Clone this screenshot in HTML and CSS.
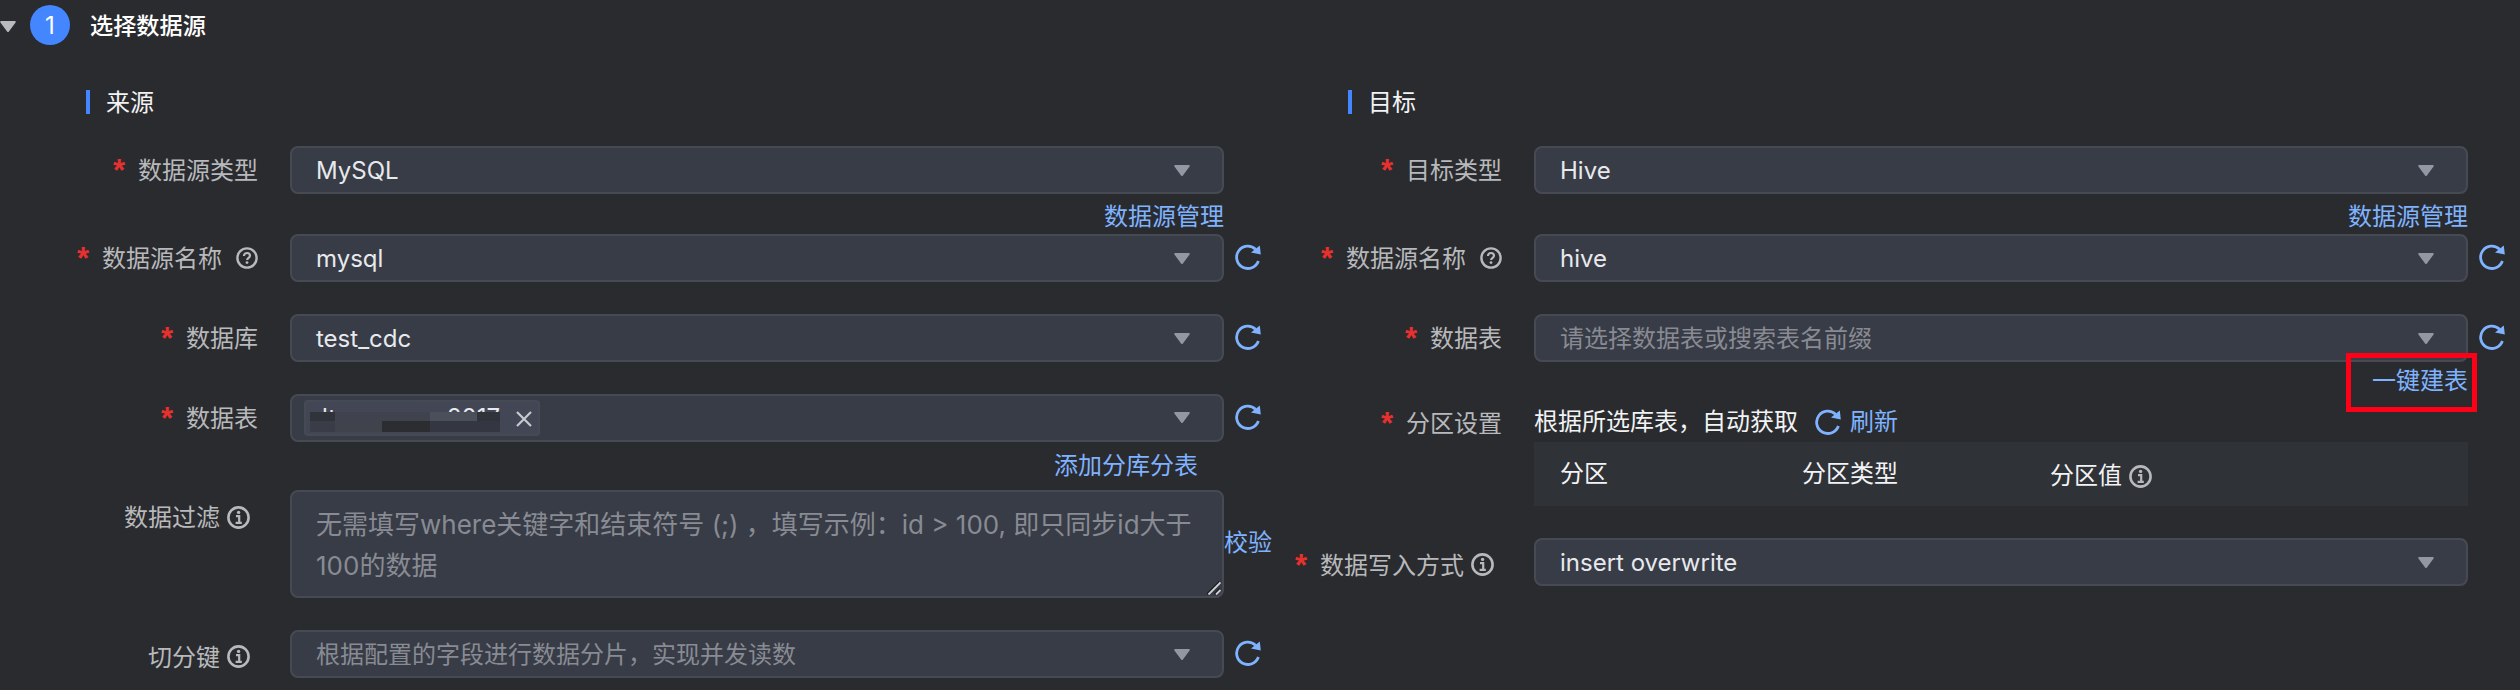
FILE: index.html
```html
<!DOCTYPE html>
<html lang="zh-CN">

<head>
    <meta charset="UTF-8">
    <meta name="viewport" content="width=device-width, initial-scale=1.0">
    <title>选择数据源</title>
    <link rel="stylesheet" href="styles.css">
</head>

<body>
    <!-- 公用图标 -->
    <svg class="sprite">
        <symbol id="arrow" viewBox="0 0 16 11">
            <path d="M1.2 0h13.6c.9 0 1.3.8.8 1.5L8.9 10.4c-.5.7-1.3.7-1.8 0L.4 1.5C-.1.8.3 0 1.2 0z" />
        </symbol>
        <symbol id="refresh" viewBox="0 0 26 26">
            <path d="M23.4 17A11.2 11.2 0 1 1 20.6 5.2" fill="none" stroke="currentColor" stroke-width="2.8" />
            <path d="M24.8 1.4L25.8 10.6L16 8.4z" fill="currentColor" />
        </symbol>
        <symbol id="info" viewBox="0 0 23 23">
            <circle cx="11.5" cy="11.5" r="10.1" fill="none" stroke="currentColor" stroke-width="2.6" />
            <circle cx="11.6" cy="6.4" r="1.7" fill="currentColor" />
            <path d="M9 10.1h3.2v6.6M8.6 16.8h6.2" fill="none" stroke="currentColor" stroke-width="2.2" />
        </symbol>
        <symbol id="help" viewBox="0 0 22 22">
            <circle cx="11" cy="11" r="9.6" fill="none" stroke="currentColor" stroke-width="2.4" />
            <path d="M8 8.9c0-1.8 1.3-2.9 3-2.9s3 1.1 3 2.7c0 2.1-2.9 2.1-2.9 4.4" fill="none" stroke="currentColor" stroke-width="2.2" />
            <circle cx="11" cy="15.6" r="1.4" fill="currentColor" />
        </symbol>
    </svg>

    <div class="step">
        <svg class="step-arrow"><use href="#arrow" /></svg>
        <span class="step-num">1</span>
        <span class="step-title">选择数据源</span>
    </div>

    <div class="columns">
        <!-- 来源 -->
        <div class="column">
            <div class="column-title">来源</div>
            <div class="form-item">
                <div class="label"><i>*</i>数据源类型</div>
                <div class="select">MySQL<svg class="arrow"><use href="#arrow" /></svg></div>
            </div>
            <div class="link-row"><a>数据源管理</a></div>
            <div class="form-item">
                <div class="label"><i>*</i>数据源名称<svg class="help"><use href="#help" /></svg></div>
                <div class="select">mysql<svg class="arrow"><use href="#arrow" /></svg></div>
                <svg class="refresh"><use href="#refresh" /></svg>
            </div>
            <div class="form-item gap">
                <div class="label"><i>*</i>数据库</div>
                <div class="select">test_cdc<svg class="arrow"><use href="#arrow" /></svg></div>
                <svg class="refresh"><use href="#refresh" /></svg>
            </div>
            <div class="form-item gap">
                <div class="label"><i>*</i>数据表</div>
                <div class="select multiple">
                    <div class="tag">
                        <div class="tag-text"><span>lt</span><span>2017</span>
                            <div class="mosaic">
                                <b class="m1"></b><b class="m2"></b><b class="m2"></b><b class="m3"></b><b class="m1"></b>
                                <b class="m4"></b><b class="m5"></b><b class="m6"></b><b class="m7"></b><b class="m7"></b>
                            </div>
                        </div>
                        <svg class="close" viewBox="0 0 16 16"><path d="M1 1L15 15M15 1L1 15" /></svg>
                    </div>
                    <svg class="arrow"><use href="#arrow" /></svg>
                </div>
                <svg class="refresh"><use href="#refresh" /></svg>
            </div>
            <div class="link-row sub"><a>添加分库分表</a></div>
            <div class="form-item top">
                <div class="label no-star">数据过滤<svg class="info"><use href="#info" /></svg></div>
                <div class="textarea">无需填写where关键字和结束符号 (;) ，填写示例：id &gt; 100, 即只同步id大于<br>100的数据
                    <svg class="resize" viewBox="0 0 14 14">
                        <path class="dark" d="M0 13L12.5 .5M7.5 13L13 7.5" />
                        <path d="M1.5 13.5L13.5 1.5M9 13.5L13.5 9" />
                    </svg>
                </div>
                <a class="check">校验</a>
            </div>
            <div class="form-item gap">
                <div class="label no-star low">切分键<svg class="info"><use href="#info" /></svg></div>
                <div class="select placeholder">根据配置的字段进行数据分片，实现并发读数<svg class="arrow"><use href="#arrow" /></svg></div>
                <svg class="refresh"><use href="#refresh" /></svg>
            </div>
        </div>

        <!-- 目标 -->
        <div class="column target">
            <div class="column-title">目标</div>
            <div class="form-item">
                <div class="label"><i>*</i>目标类型</div>
                <div class="select">Hive<svg class="arrow"><use href="#arrow" /></svg></div>
            </div>
            <div class="link-row"><a>数据源管理</a></div>
            <div class="form-item">
                <div class="label"><i>*</i>数据源名称<svg class="help"><use href="#help" /></svg></div>
                <div class="select">hive<svg class="arrow"><use href="#arrow" /></svg></div>
                <svg class="refresh"><use href="#refresh" /></svg>
            </div>
            <div class="form-item gap">
                <div class="label"><i>*</i>数据表</div>
                <div class="select placeholder">请选择数据表或搜索表名前缀<svg class="arrow"><use href="#arrow" /></svg></div>
                <svg class="refresh"><use href="#refresh" /></svg>
            </div>
            <div class="link-row create"><a>一键建表<span class="mark"></span></a></div>
            <div class="form-item top">
                <div class="label partition-label"><i>*</i>分区设置</div>
                <div class="partition">
                    <div class="partition-tip">根据所选库表，自动获取<svg class="refresh"><use href="#refresh" /></svg><a>刷新</a></div>
                    <div class="partition-head">
                        <span>分区</span>
                        <span>分区类型</span>
                        <span class="value">分区值<svg class="info"><use href="#info" /></svg></span>
                    </div>
                </div>
            </div>
            <div class="form-item gap">
                <div class="label no-star low"><i>*</i>数据写入方式<svg class="info"><use href="#info" /></svg></div>
                <div class="select">insert overwrite<svg class="arrow"><use href="#arrow" /></svg></div>
            </div>
        </div>
    </div>
</body>

</html>
```

FILE: styles.css
```css
* {
    margin: 0;
    padding: 0;
    box-sizing: border-box;
}

body {
    height: 690px;
    overflow: hidden;
    background-color: #2a2b2e;
    color: #f2f3f5;
    font-family: Inter, "Noto Sans CJK SC", sans-serif;
    font-size: 24px;
    line-height: 36px;
    white-space: nowrap;
}

svg {
    display: block;
    flex: none;
}

a {
    color: #7fb3ff;
}

.sprite {
    width: 0;
    height: 0;
    position: absolute;
}

/* 步骤标题 */
.step {
    display: flex;
    align-items: center;
    height: 50px;
}

.step-arrow {
    width: 16px;
    height: 11px;
    margin-top: 2px;
    fill: #b9babd;
}

.step-num {
    width: 40px;
    height: 40px;
    margin: 0 20px 0 14px;
    border-radius: 50%;
    background-color: #4386ff;
    color: #fff;
    line-height: 41px;
    text-align: center;
}

.step-title {
    padding-top: 2px;
    font-size: 23.2px;
    font-weight: 500;
    color: #fff;
}

.columns {
    display: grid;
    grid-template-columns: 1244px 1fr;
    padding-top: 40px;
}

.column-title {
    height: 24px;
    margin: 0 0 32px 86px;
    padding-left: 16px;
    border-left: 4px solid #4386ff;
    line-height: 26px;
}

.target .column-title {
    margin-left: 104px;
}

.form-item {
    display: flex;
    align-items: center;
}

.form-item.top {
    align-items: flex-start;
}

.form-item.gap {
    margin-top: 32px;
}

.label {
    display: flex;
    flex: none;
    justify-content: flex-end;
    align-items: center;
    width: 258px;
    margin-right: 32px;
    padding-top: 2px;
    color: #b8b9bc;
}

.label i {
    margin-right: 13px;
    color: #e8302e;
    font: bold 31px/20px "Liberation Sans", sans-serif;
    height: 20px;
}

.label.no-star {
    padding-right: 8px;
}

.top .label.no-star {
    margin-top: 8px;
}

.label.low {
    padding-top: 7px;
}

.help {
    width: 22px;
    height: 22px;
    margin-left: 14px;
}

.info {
    width: 23px;
    height: 23px;
    margin-left: 7px;
}

.label .info,
.label .help {
    margin-top: -2px;
}

.select {
    display: flex;
    flex: none;
    align-items: center;
    justify-content: space-between;
    width: 934px;
    height: 48px;
    padding: 2px 32px 0 24px;
    border: 2px solid #464a53;
    border-radius: 8px;
    background-color: #383c46;
    color: #e7e9ed;
}

.select.multiple {
    padding: 0 32px 0 12px;
}

.placeholder,
.textarea {
    color: #888b93;
}

.arrow {
    width: 16px;
    height: 11px;
    margin-top: -2px;
    fill: #9297a3;
}

.refresh {
    width: 26px;
    height: 26px;
    margin: -2px 0 0 11px;
    color: #7fb3ff;
}

.link-row {
    width: 1224px;
    height: 40px;
    padding-top: 5px;
    text-align: right;
}

.link-row.sub {
    height: 48px;
    padding: 6px 26px 0 0;
}

.link-row.create {
    padding-top: 1px;
}

.link-row a {
    position: relative;
}

/* 红色标注框 */
.mark {
    position: absolute;
    top: -13px;
    right: -9px;
    width: 131px;
    height: 59px;
    border: 5px solid #ff0016;
}

/* 已选的表 */
.tag {
    display: flex;
    align-items: center;
    justify-content: space-between;
    width: 236px;
    height: 36px;
    padding: 0 6px 0 4px;
    border: 2px solid #464a55;
    border-radius: 4px;
    background-color: #434755;
}

.tag-text {
    position: relative;
    display: flex;
    justify-content: space-between;
    width: 190px;
    height: 32px;
    padding-left: 12px;
    line-height: 32px;
}

.mosaic {
    position: absolute;
    left: 0;
    top: 10px;
    display: grid;
    grid-template-columns: 25px 47px 48px 47px 23px;
    grid-template-rows: 9px 11px;
}

.m1 { background-color: #30333a; }
.m2 { background-color: #40434e; }
.m3 { background-color: #4b4f5a; }
.m4 { background-color: #3a3d47; }
.m5 { background-color: #41434c; }
.m6 { background-color: #2c2d31; }
.m7 { background-color: #343741; }

.close {
    width: 16px;
    height: 16px;
    margin-top: 2px;
    fill: none;
    stroke: #c6c9d0;
    stroke-width: 2.2;
}

.textarea {
    position: relative;
    flex: none;
    width: 934px;
    height: 108px;
    padding: 12px 24px;
    border: 2px solid #464a53;
    border-radius: 8px;
    background-color: #383c46;
    font-size: 26px;
    line-height: 41px;
}

.resize {
    position: absolute;
    right: 1px;
    bottom: 1px;
    width: 14px;
    height: 14px;
    fill: none;
    stroke: #d0d2d6;
    stroke-width: 1.8;
}

.resize .dark {
    stroke: #1d1e21;
}

.check {
    margin-top: 35px;
}

/* 分区设置 */
.partition {
    width: 934px;
}

.partition-label {
    margin-top: 2px;
}

.partition-tip {
    display: flex;
    align-items: center;
    height: 40px;
}

.partition-tip .refresh {
    margin: 0 9px 0 17px;
}

.partition-head {
    display: grid;
    grid-template-columns: 242px 248px 1fr;
    align-items: center;
    height: 64px;
    padding-left: 26px;
    background-color: #2f3237;
}

.partition-head .value {
    display: flex;
    align-items: center;
    padding-top: 4px;
}

.partition-head .info {
    color: #b8b9bc;
}
```
